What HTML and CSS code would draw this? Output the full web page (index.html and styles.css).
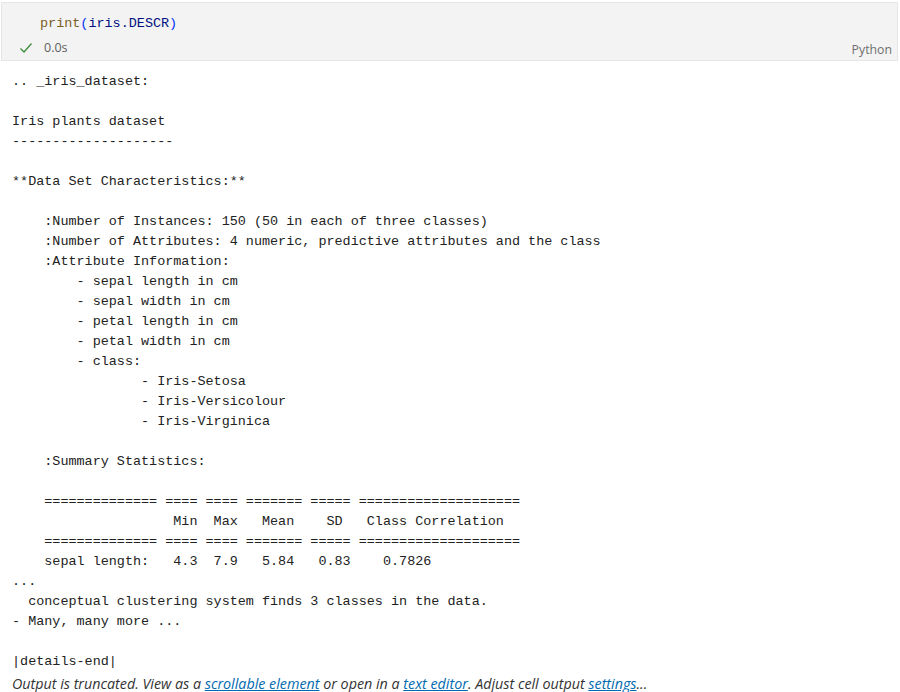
FILE: index.html
```
<!DOCTYPE html>
<html>
<head>
<meta charset="utf-8">
<link rel="stylesheet" href="styles.css">
</head>
<body>
<div class="cell">
  <div class="code"><span class="fn">print</span><span class="br">(</span><span class="var">iris</span>.<span class="var">DESCR</span><span class="br">)</span></div>
  <div class="status">
    <div class="left">
      <svg class="check" width="14" height="14" viewBox="0 0 14 14"><path d="M1.5 7.5 L5 11 L12.5 2.5" fill="none" stroke="#388a34" stroke-width="1.2"/></svg>
      <span class="time">0.0s</span>
    </div>
    <span class="lang">Python</span>
  </div>
</div>
<div class="output">
<pre class="text">.. _iris_dataset:

Iris plants dataset
--------------------

**Data Set Characteristics:**

    :Number of Instances: 150 (50 in each of three classes)
    :Number of Attributes: 4 numeric, predictive attributes and the class
    :Attribute Information:
        - sepal length in cm
        - sepal width in cm
        - petal length in cm
        - petal width in cm
        - class:
                - Iris-Setosa
                - Iris-Versicolour
                - Iris-Virginica

    :Summary Statistics:

    ============== ==== ==== ======= ===== ====================
                    Min  Max   Mean    SD   Class Correlation
    ============== ==== ==== ======= ===== ====================
    sepal length:   4.3  7.9   5.84   0.83    0.7826
...
  conceptual clustering system finds 3 classes in the data.
- Many, many more ...

|details-end|</pre>
  <div class="truncated">Output is truncated. View as a <a href="#">scrollable element</a> or open in a <a href="#">text editor</a>. Adjust cell output <a href="#">settings</a>...</div>
</div>
</body>
</html>
```

FILE: styles.css
```
html, body {
  margin: 0;
  padding: 0;
  background: #ffffff;
}

.cell {
  margin: 2px 2px 0 1px;
  background: #f3f3f3;
  border: 1px solid #e6e6e6;
  box-sizing: border-box;
  height: 59px;
}

.code {
  font-family: "Liberation Mono", monospace;
  font-size: 13.45px;
  line-height: 20px;
  padding: 11px 0 0 38px;
  color: #001080;
}

.code .fn { color: #795e26; }
.code .br { color: #0431fa; }
.code .var { color: #001080; }

.status {
  display: flex;
  justify-content: space-between;
  align-items: center;
  padding: 3px 5px 0 17px;
  font-family: "Open Sans", sans-serif;
  font-size: 12.5px;
  color: #616161;
}

.status .left {
  display: flex;
  align-items: center;
  gap: 11px;
}

.status .lang {
  margin-top: 4px;
  font-size: 12.3px;
  color: #6f6f6f;
}

.output {
  padding: 11px 0 0 12px;
}

.text {
  margin: 0;
  font-family: "Liberation Mono", monospace;
  font-size: 13.45px;
  line-height: 20px;
  color: #222222;
}

.truncated {
  margin-top: 4px;
  font-family: "Open Sans", sans-serif;
  font-style: italic;
  font-size: 14.3px;
  line-height: 16px;
  color: #333333;
}

.truncated a {
  color: #006ab1;
  text-decoration: underline;
}
```
